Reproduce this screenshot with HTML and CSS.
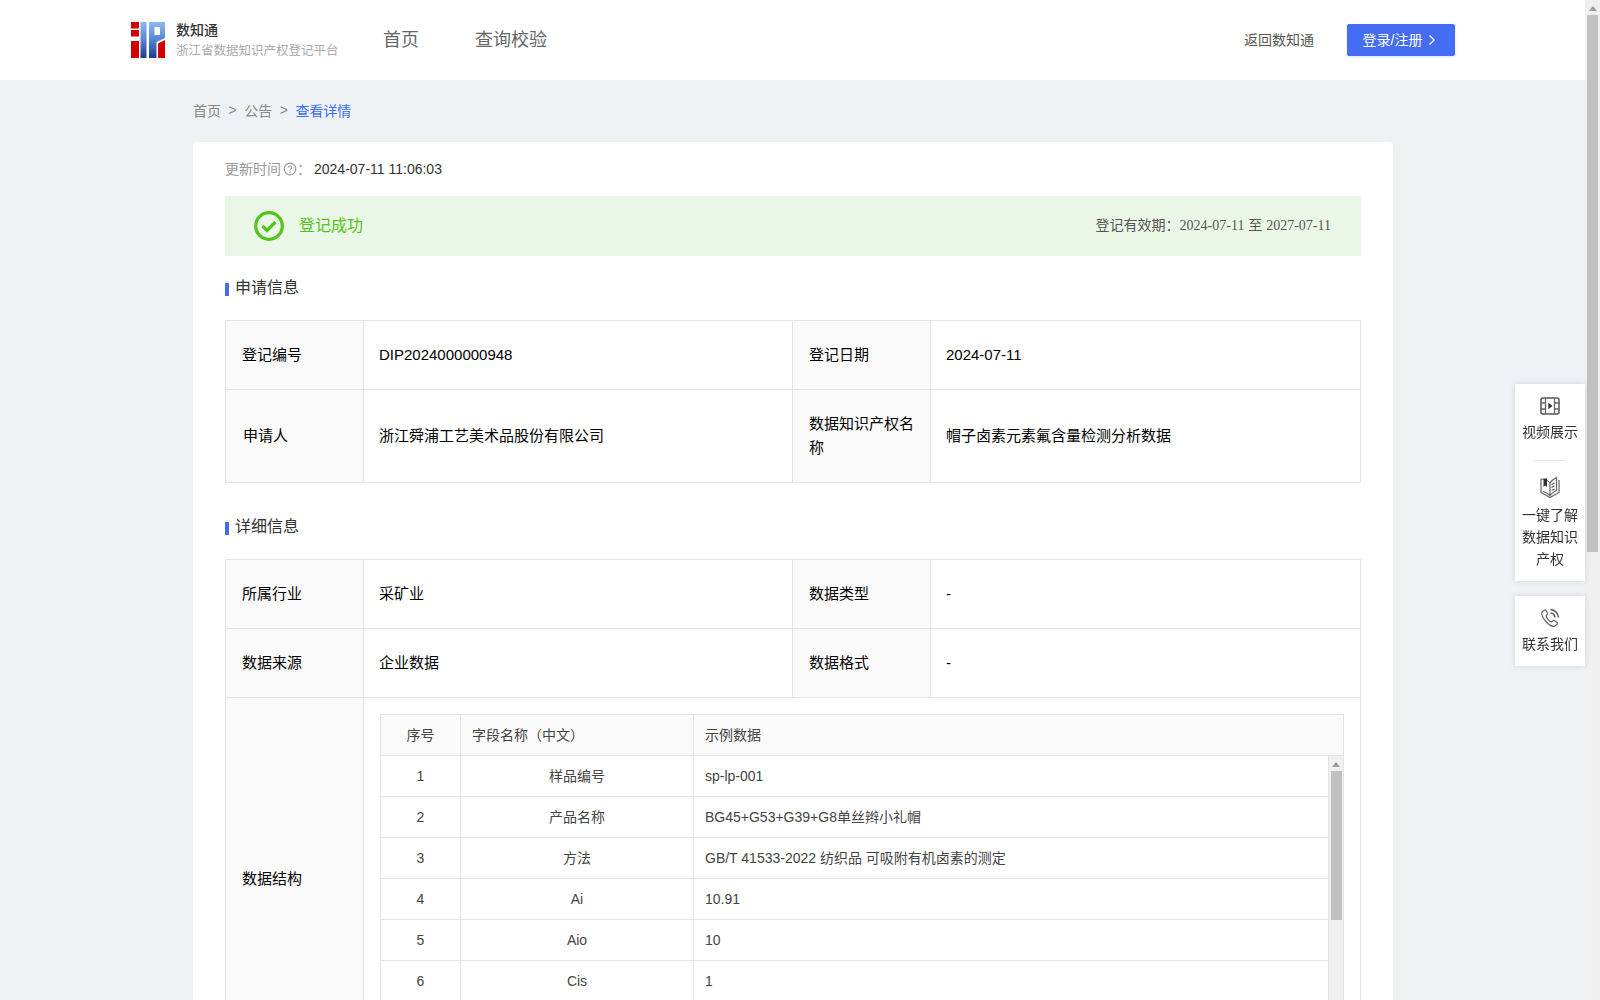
FILE: index.html
```html
<!DOCTYPE html>
<html lang="zh-CN">
<head>
<meta charset="utf-8">
<title>数知通</title>
<link rel="stylesheet" href="styles.css">
</head>
<body>
<div class="window">
  <div class="page">
    <header class="topbar">
      <div class="brand">
        <svg class="logo" viewBox="0 0 34 36" width="34" height="36">
          <defs>
            <linearGradient id="lg" x1="0" y1="0" x2="0" y2="1">
              <stop offset="0" stop-color="#8db9ec"/>
              <stop offset="0.5" stop-color="#5585cf"/>
              <stop offset="1" stop-color="#1f3b8c"/>
            </linearGradient>
            <linearGradient id="lp" gradientUnits="userSpaceOnUse" x1="0" y1="0" x2="0" y2="36">
              <stop offset="0" stop-color="#8db9ec"/>
              <stop offset="0.5" stop-color="#5585cf"/>
              <stop offset="1" stop-color="#1f3b8c"/>
            </linearGradient>
          </defs>
          <rect x="0" y="0" width="8" height="6.500" fill="#d40000"/>
          <rect x="0" y="8" width="8" height="6.500" fill="#d40000"/>
          <rect x="0" y="19" width="8" height="17" fill="#d40000"/>
          <rect x="9.500" y="0" width="6" height="36" fill="url(#lg)"/>
          <path fill-rule="evenodd" d="M18 0H34V16L25.500 20V36H18ZM23.500 5V13H29V5Z" fill="url(#lp)"/>
          <path d="M27 21.500 34 18V36H27Z" fill="#d40000"/>
        </svg>
        <div class="brand-text">
          <div class="brand-name">数知通</div>
          <div class="brand-sub">浙江省数据知识产权登记平台</div>
        </div>
      </div>
      <nav class="mainnav">
        <a class="mainnav-item">首页</a>
        <a class="mainnav-item">查询校验</a>
      </nav>
      <div class="actions">
        <a class="back-link">返回数知通</a>
        <button class="login"><span class="login-text">登录/注册</span><svg class="login-arrow" viewBox="0 0 8 12" width="8" height="12"><path d="M1.500 1.500 6 6l-4.500 4.500" fill="none" stroke="#fff" stroke-width="1.400"/></svg></button>
      </div>
    </header>

    <main class="content">
      <div class="crumbs">
        <span>首页</span><span class="sep">&gt;</span><span>公告</span><span class="sep">&gt;</span><span class="crumb-current">查看详情</span>
      </div>

      <section class="card">
        <div class="updated">
          <span class="updated-label">更新时间</span>
          <svg class="help" viewBox="0 0 14 14" width="14" height="14"><circle cx="7" cy="7" r="5.800" fill="none" stroke="#999" stroke-width="1.200"/><path d="M5.300 5.600c0-2.200 3.500-2.200 3.500 0 0 1.300-1.700 1.200-1.700 2.600" fill="none" stroke="#999" stroke-width="1.100"/><circle cx="7.100" cy="10" r=".8" fill="#999"/></svg>
          <span class="updated-label colon">：</span>
          <span class="updated-value">2024-07-11 11:06:03</span>
        </div>

        <div class="status">
          <div class="status-left">
            <svg class="status-icon" viewBox="0 0 30 30" width="30" height="30"><circle cx="15" cy="15" r="13.300" fill="none" stroke="#52c41a" stroke-width="3.200"/><path d="M8.500 15 13 19.500 21.500 11" fill="none" stroke="#52c41a" stroke-width="3.200"/></svg>
            <span class="status-text">登记成功</span>
          </div>
          <div class="status-right">登记有效期：<span class="serif">2024-07-11</span> 至 <span class="serif">2027-07-11</span></div>
        </div>

        <h2 class="section-title first">申请信息</h2>
        <div class="info-grid">
          <div class="cell label row69">登记编号</div>
          <div class="cell row69">DIP2024000000948</div>
          <div class="cell label row69">登记日期</div>
          <div class="cell row69 end">2024-07-11</div>
          <div class="cell label row93"><span class="nudge">申请人</span></div>
          <div class="cell row93">浙江舜浦工艺美术品股份有限公司</div>
          <div class="cell label row93">数据知识产权名称</div>
          <div class="cell row93 end">帽子卤素元素氟含量检测分析数据</div>
        </div>

        <h2 class="section-title second">详细信息</h2>
        <div class="info-grid">
          <div class="cell label row69">所属行业</div>
          <div class="cell row69">采矿业</div>
          <div class="cell label row69">数据类型</div>
          <div class="cell row69 end">-</div>
          <div class="cell label row69">数据来源</div>
          <div class="cell row69">企业数据</div>
          <div class="cell label row69">数据格式</div>
          <div class="cell row69 end">-</div>
          <div class="cell label rowlong">数据结构</div>
          <div class="cell nested-wrap">
            <div class="nested">
              <div class="nested-head">
                <div class="nh c1">序号</div>
                <div class="nh c2">字段名称（中文）</div>
                <div class="nh c3">示例数据</div>
              </div>
              <div class="nested-body">
                <div class="nested-rows">
                  <div class="nr"><div class="nd c1">1</div><div class="nd c2">样品编号</div><div class="nd c3b">sp-lp-001</div></div>
                  <div class="nr"><div class="nd c1">2</div><div class="nd c2">产品名称</div><div class="nd c3b">BG45+G53+G39+G8单丝辫小礼帽</div></div>
                  <div class="nr"><div class="nd c1">3</div><div class="nd c2">方法</div><div class="nd c3b">GB/T 41533-2022 纺织品 可吸附有机卤素的测定</div></div>
                  <div class="nr"><div class="nd c1">4</div><div class="nd c2">Ai</div><div class="nd c3b">10.91</div></div>
                  <div class="nr"><div class="nd c1">5</div><div class="nd c2">Aio</div><div class="nd c3b">10</div></div>
                  <div class="nr"><div class="nd c1">6</div><div class="nd c2">Cis</div><div class="nd c3b">1</div></div>
                </div>
                <div class="mini-scroll">
                  <div class="mini-arrow"></div>
                  <div class="mini-thumb"></div>
                </div>
              </div>
            </div>
          </div>
        </div>
      </section>
    </main>
  </div>

  <div class="page-scroll">
    <div class="page-arrow"></div>
    <div class="page-thumb"></div>
  </div>
</div>

<aside class="float">
  <div class="float-card first-card">
    <a class="float-item">
      <svg viewBox="0 0 20 18" width="20" height="18"><rect x="1" y="1" width="18" height="16" rx="2" fill="none" stroke="#555" stroke-width="1.500"/><path d="M5.500 1v16M14.500 1v16M1 6h4.500M1 12h4.500M14.500 6H19M14.500 12H19" stroke="#666" stroke-width="1.300" fill="none"/><path d="M8.300 5.800 12.500 9l-4.200 3.200z" fill="#333"/></svg>
      <span>视频展示</span>
    </a>
    <div class="float-divider"></div>
    <a class="float-item">
      <svg viewBox="0 0 20 22" width="20" height="22"><path d="M1 3V16.500L10 21.500 19 16.500V4" fill="none" stroke="#666" stroke-width="1.200"/><path d="M1 3C5 3 8 4.500 10 7V19.500C8 17.500 5 16 3 15.500M10 7C11.500 4.500 13.500 3 16.500 1.500V14.500C14 15.500 12 17 10 19.500" fill="none" stroke="#666" stroke-width="1.200"/><path d="M3.500 2.500H7V11L5.200 9.500 3.500 11Z" fill="#333"/><path d="M11.500 8.500 14.500 7M11.500 11.500 14.500 10M11.500 14.500 14.500 13" stroke="#555" stroke-width="1.200" fill="none"/></svg>
      <span>一键了解<br>数据知识<br>产权</span>
    </a>
  </div>
  <div class="float-card contact-card">
    <a class="float-item">
      <svg viewBox="0 0 20 20" width="20" height="20"><path d="M4.500 2 2.500 3.500C1 5 2 9 5.500 13s7.500 6 9.500 5l2.200-2c.5-.6.3-1.200-.2-1.600l-2.600-1.800c-.6-.4-1.200-.3-1.700.2l-1 1c-1 0-2.500-1-3.700-2.500S6 8.500 6.200 7.500l1-1c.4-.5.5-1.100.1-1.700L5.900 2.300C5.500 1.800 5 1.700 4.500 2z" fill="none" stroke="#666" stroke-width="1.200"/><path d="M10.500 5c2.500.2 4.300 2 4.500 4.500M10.500 1.500c4.300.3 7.700 3.700 8 8" fill="none" stroke="#555" stroke-width="1.500"/></svg>
      <span>联系我们</span>
    </a>
  </div>
</aside>
</body>
</html>
```
FILE: styles.css
```css
* { box-sizing: border-box; }
html, body { margin: 0; padding: 0; height: 100%; overflow: hidden; }
body {
  font-family: "Liberation Sans", "Noto Sans CJK SC", sans-serif;
  font-size: 14px;
  color: #333;
  background: #eff2f5;
}
.window { display: flex; height: 1000px; }
.page { width: 1585px; height: 1000px; overflow: hidden; }

.topbar {
  height: 80px;
  background: #fff;
  display: flex;
  align-items: center;
  padding: 0 130px 0 131px;
}
.brand { display: flex; align-items: center; width: 252px; }
.logo { margin-right: 11px; flex: none; }
.brand-name { font-size: 14px; line-height: 20px; color: #333; font-weight: 500; }
.brand-sub { font-size: 12.500px; line-height: 18px; margin-top: 2px; color: #aaa; white-space: nowrap; }
.mainnav { display: flex; gap: 56px; }
.mainnav-item { font-size: 18px; color: #666; line-height: 24px; }
.actions { margin-left: auto; display: flex; align-items: center; gap: 33px; }
.back-link { color: #555; font-size: 14px; padding-bottom: 2px; }
.login {
  width: 108px;
  height: 32px;
  background: #456df4;
  color: #fff;
  border: 0;
  border-radius: 2px;
  font: inherit;
  font-size: 14px;
  display: flex;
  align-items: center;
  justify-content: center;
  gap: 6px;
  padding: 0 3px 0 0;
  box-shadow: 0 1px 3px rgba(69, 109, 244, .2);
}
.login-text { padding-bottom: 2px; }
.login-arrow { flex: none; }

.content { width: 1200px; margin-left: 193px; }
.crumbs { height: 62px; display: flex; align-items: center; gap: 7.500px; color: #888; font-size: 14px; padding-bottom: 3px; }
.sep { color: #888; }
.crumb-current { color: #3b6cf5; }

.card { background: #fff; border-radius: 4px; padding: 16px 32px 0; }
.updated { display: flex; align-items: center; height: 22px; margin-bottom: 16px; }
.updated-label { color: #999; padding-bottom: 2px; }
.help { margin-left: 2px; }
.colon { width: 17px; }
.updated-value { color: #333; }

.status {
  height: 60px;
  background: #ebf7e6;
  display: flex;
  align-items: center;
  justify-content: space-between;
  padding: 0 30px 0 29px;
}
.status-left { display: flex; align-items: center; gap: 15px; }
.status-text { color: #52c41a; font-size: 16px; padding-bottom: 4px; }
.status-right { color: #555; font-size: 14px; padding-bottom: 4px; }
.serif { font-family: "Liberation Serif", serif; }

.section-title {
  margin: 0;
  font-size: 16px;
  font-weight: 400;
  line-height: 22px;
  color: #333;
  display: flex;
  align-items: center;
  gap: 6px;
}
.section-title::before { content: ""; width: 4px; height: 13px; background: #456df4; margin-top: 3px; }
.section-title.first { margin: 21px 0 21px; }
.section-title.second { margin: 33px 0 21px; }

.info-grid {
  display: grid;
  grid-template-columns: 138px 429px 138px 430px;
  border-top: 1px solid #e4e4e4;
  border-left: 1px solid #e4e4e4;
  width: 1136px;
  color: #000;
  font-size: 15px;
}
.cell {
  border-right: 1px solid #e4e4e4;
  border-bottom: 1px solid #e4e4e4;
  display: flex;
  align-items: center;
  padding: 0 16px 1px 15px;
  line-height: 24px;
}
.label { background: #fafafa; padding-left: 16px; }
.nudge { padding-left: 1px; }
.row69 { height: 69px; }
.row93 { height: 93px; }
.rowlong { height: 363px; }
.nested-wrap { grid-column: span 3; padding: 16px; display: block; height: 363px; }

.nested { border: 1px solid #e4e4e4; border-bottom: 0; font-size: 14px; color: #444; height: 330px; overflow: hidden; }
.nested-head { display: flex; height: 41px; background: #fafafa; border-bottom: 1px solid #e4e4e4; }
.nh { display: flex; align-items: center; height: 40px; line-height: 20px; }
.c1 { width: 80px; justify-content: center; border-right: 1px solid #e4e4e4; flex: none; }
.c2 { width: 233px; border-right: 1px solid #e4e4e4; flex: none; }
.nh.c2 { padding-left: 11px; }
.nh.c3 { padding-left: 11px; flex: 1; }
.nested-body { display: flex; height: 290px; }
.nested-rows { flex: 1; border-right: 1px solid #e4e4e4; }
.nr { display: flex; height: 41px; border-bottom: 1px solid #e4e4e4; }
.nd { display: flex; align-items: center; height: 40px; }
.nd.c2 { justify-content: center; }
.c3b { padding-left: 11px; flex: 1; }
.mini-scroll { width: 14px; background: #f0f0f0; flex: none; }
.mini-arrow { width: 0; height: 0; border: 4px solid transparent; border-top: 0; border-bottom: 5px solid #9d9d9d; margin: 6px auto 0; }
.mini-thumb { width: 11px; height: 149px; background: #c1c1c1; margin: 4px 0 0 2px; }

.page-scroll { width: 15px; height: 1000px; background: #f0f0f0; flex: none; }
.page-arrow { width: 0; height: 0; border: 4px solid transparent; border-top: 0; border-bottom: 5px solid #9d9d9d; margin: 0 auto; position: relative; top: 6px; }
.page-thumb { width: 11px; height: 537px; background: #c1c1c1; margin: 10px 0 0 2px; }

.float { position: fixed; left: 1515px; top: 384px; width: 70px; display: flex; flex-direction: column; gap: 15px; }
.float-card { background: #fff; box-shadow: 0 0 6px rgba(80, 90, 110, .2); }
.first-card { padding: 13px 0 11px; }
.contact-card { padding: 12px 0 11px; }
.float-item { display: flex; flex-direction: column; align-items: center; color: #333; font-size: 14px; line-height: 22px; text-align: center; }
.float-item svg { display: block; margin-bottom: 6px; }
.contact-card .float-item svg { margin-bottom: 5px; }
.float-divider { width: 32px; height: 1px; background: #e6e6e6; margin: 17px auto 15px; }
```
